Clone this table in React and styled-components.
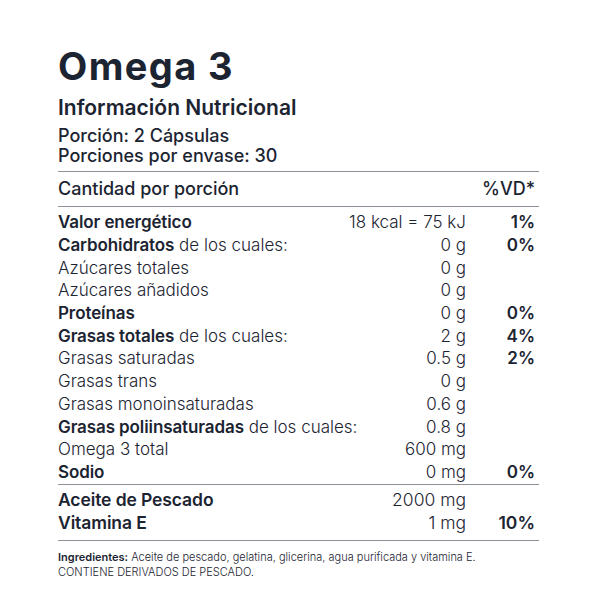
import React from "react";
import styled, { createGlobalStyle } from "styled-components";

const GlobalStyle = createGlobalStyle`
  html, body { margin: 0; padding: 0; background: #ffffff; }
  body { font-family: Inter, "Open Sans", sans-serif; color: #1c2432; }
`;

const rows = [
  { label: "Valor energético", bold: true, value: "18 kcal = 75 kJ", vd: "1%" },
  { label: "Carbohidratos", bold: true, extra: " de los cuales:", value: "0 g", vd: "0%" },
  { label: "Azúcares totales", value: "0 g" },
  { label: "Azúcares añadidos", value: "0 g" },
  { label: "Proteínas", bold: true, value: "0 g", vd: "0%" },
  { label: "Grasas totales", bold: true, extra: " de los cuales:", value: "2 g", vd: "4%" },
  { label: "Grasas saturadas", value: "0.5 g", vd: "2%" },
  { label: "Grasas trans", value: "0 g" },
  { label: "Grasas monoinsaturadas", value: "0.6 g" },
  { label: "Grasas poliinsaturadas", bold: true, extra: " de los cuales:", value: "0.8 g" },
  { label: "Omega 3 total", value: "600 mg" },
  { label: "Sodio", bold: true, value: "0 mg", vd: "0%" },
];

const extras = [
  { label: "Aceite de Pescado", value: "2000 mg" },
  { label: "Vitamina E", value: "1 mg", vd: "10%" },
];

export default function App() {
  return (
    <>
      <GlobalStyle />
      <Label>
        <Title>Omega 3</Title>
        <Subtitle>Información Nutricional</Subtitle>
        <Serving>
          <p>Porción: 2 Cápsulas</p>
          <p>Porciones por envase: 30</p>
        </Serving>
        <Divider />
        <HeaderRow>
          <span>Cantidad por porción</span>
          <span>%VD*</span>
        </HeaderRow>
        <Divider />
        <Table>
          {rows.map((r) => (
            <Row key={r.label}>
              <Name>
                {r.bold ? <strong>{r.label}</strong> : r.label}
                {r.extra}
              </Name>
              <Value>{r.value}</Value>
              <Vd>{r.vd}</Vd>
            </Row>
          ))}
        </Table>
        <Divider />
        <Table $big>
          {extras.map((r) => (
            <Row key={r.label} $big>
              <Name>
                <strong>{r.label}</strong>
              </Name>
              <Value>{r.value}</Value>
              <Vd>{r.vd}</Vd>
            </Row>
          ))}
        </Table>
        <Divider />
        <Ingredients>
          <strong>Ingredientes:</strong> Aceite de pescado, gelatina, glicerina, agua purificada y vitamina E.
          <br />
          CONTIENE DERIVADOS DE PESCADO.
        </Ingredients>
      </Label>
    </>
  );
}

const Label = styled.div`
  width: 481px;
  padding: 42px 0 0 58px;
`;

const Title = styled.h1`
  margin: 0;
  font-size: 38px;
  font-weight: 700;
  line-height: 48px;
  letter-spacing: 1.4px;
`;

const Subtitle = styled.h2`
  margin: 5px 0 0;
  font-size: 21px;
  font-weight: 600;
  line-height: 26px;
`;

const Serving = styled.div`
  margin: 5px 0 5px;
  p {
    margin: 0;
    font-size: 18px;
    font-weight: 500;
    line-height: 20px;
  }
`;

const Divider = styled.hr`
  margin: 0;
  border: none;
  border-top: 1.5px solid #8e9298;
`;

const HeaderRow = styled.div`
  display: flex;
  justify-content: space-between;
  padding: 7px 4px 7px 0;
  font-size: 18px;
  font-weight: 500;
  line-height: 20px;
`;

const Table = styled.div`
  display: flex;
  flex-direction: column;
  padding: ${(p) => (p.$big ? "3px 0 6px" : "4px 0 1px")};
`;

const Row = styled.div`
  display: grid;
  grid-template-columns: minmax(0, 1fr) 130px 70px;
  height: ${(p) => (p.$big ? "23px" : "22.7px")};
  align-items: center;
  font-size: ${(p) => (p.$big ? "17.5px" : "17px")};
  font-weight: 300;
`;

const Name = styled.span`
  white-space: nowrap;
  strong { font-weight: 600; letter-spacing: -0.1px; }
`;

const Value = styled.span`
  text-align: right;
  padding-right: 3px;
  white-space: nowrap;
`;

const Vd = styled.span`
  text-align: right;
  padding-right: 4px;
  font-weight: 600;
`;

const Ingredients = styled.p`
  margin: 9px 0 0;
  font-size: 11px;
  line-height: 14.5px;
  font-weight: 300;
  strong { font-weight: 600; }
`;
